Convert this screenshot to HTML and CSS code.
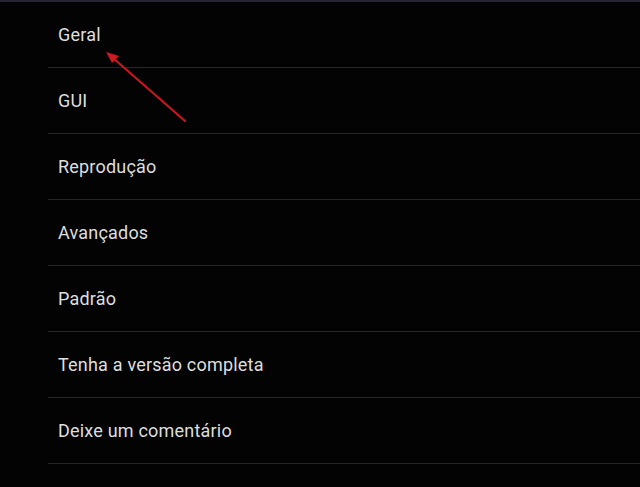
FILE: index.html
```html
<!DOCTYPE html>
<html lang="pt">
<head>
<meta charset="utf-8">
<title>Configurações</title>
<link rel="stylesheet" href="styles.css">
</head>
<body>
<div class="topbar"></div>
<ul class="menu">
  <li class="item">Geral</li>
  <li class="item">GUI</li>
  <li class="item">Reprodução</li>
  <li class="item">Avançados</li>
  <li class="item">Padrão</li>
  <li class="item">Tenha a versão completa</li>
  <li class="item">Deixe um comentário</li>
</ul>
<svg class="arrow" width="640" height="487" viewBox="0 0 640 487" aria-hidden="true">
  <line x1="185" y1="121" x2="113" y2="58" stroke="#c8161e" stroke-width="2.2" stroke-linecap="round"/>
  <polygon points="106,52 119,56 112,63" fill="#d01820"/>
</svg>
</body>
</html>
```
FILE: styles.css
```css
html, body {
  margin: 0;
  padding: 0;
  background: #030304;
  height: 100%;
  overflow: hidden;
}
body {
  position: relative;
  font-family: Roboto, "Noto Sans", sans-serif;
}
.topbar {
  height: 2px;
  background: #24233a;
}
.menu {
  list-style: none;
  margin: 0;
  padding: 0 0 0 48px;
}
.item {
  height: 65px;
  border-bottom: 1px solid #262626;
  display: flex;
  align-items: center;
  padding-left: 10px;
  color: #dedede;
  font-size: 18px;
  letter-spacing: 0.2px;
}
.arrow {
  position: absolute;
  left: 0;
  top: 0;
  pointer-events: none;
}
```
